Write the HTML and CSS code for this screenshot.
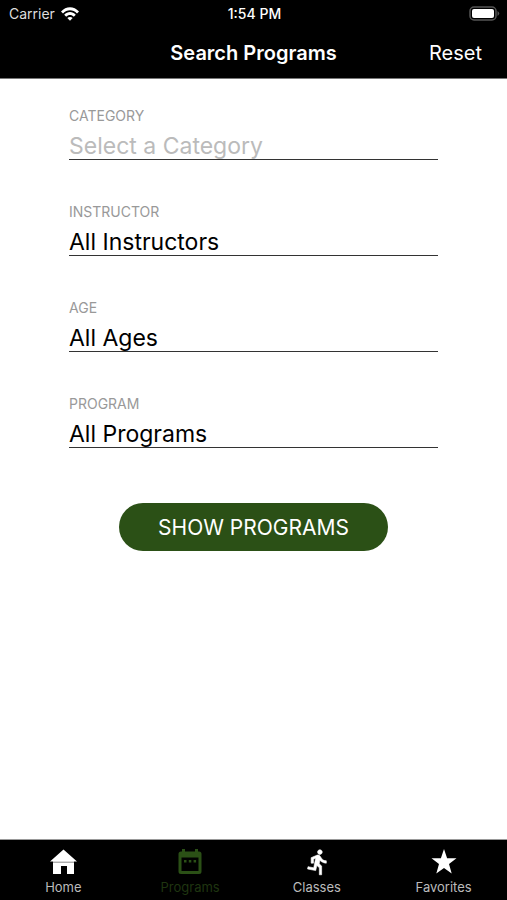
FILE: index.html
```html
<!DOCTYPE html>
<html lang="en">
<head>
<meta charset="utf-8">
<meta name="viewport" content="width=device-width, initial-scale=1">
<title>Search Programs</title>
<link rel="stylesheet" href="styles.css">
</head>
<body>
<header class="header">
  <div class="status">
    <div class="carrier">
      <span>Carrier</span>
      <svg class="wifi" viewBox="0 0 18 14" aria-hidden="true">
        <path d="M0 4.6C5-1.2 13-1.2 18 4.6L16 6.6C12 2.2 6 2.2 2 6.6Z"/>
        <path d="M3.2 7.8C6.5 4.2 11.5 4.2 14.8 7.8L12.8 9.8C10.6 7.4 7.4 7.4 5.2 9.8Z"/>
        <path d="M6.3 11C7.8 9.5 10.2 9.5 11.7 11L9 13.8Z"/>
      </svg>
    </div>
    <time class="clock">1:54 PM</time>
    <svg class="battery" viewBox="0 0 31 15" aria-hidden="true">
      <rect class="battery-shell" x="1" y="1" width="26" height="13" rx="4"/>
      <rect class="battery-fill" x="3" y="3" width="22" height="9" rx="2"/>
      <path class="battery-cap" d="M28.500 5Q32 7.500 28.500 10Z"/>
    </svg>
  </div>
  <div class="navbar">
    <h1 class="title">Search Programs</h1>
    <button class="reset" type="reset" form="search">Reset</button>
  </div>
</header>

<main class="main">
  <form class="form" id="search">
    <div class="field">
      <label class="label" for="category">CATEGORY</label>
      <select class="select" id="category" required>
        <option value="">Select a Category</option>
      </select>
    </div>
    <div class="field">
      <label class="label" for="instructor">INSTRUCTOR</label>
      <select class="select" id="instructor"><option>All Instructors</option></select>
    </div>
    <div class="field">
      <label class="label" for="age">AGE</label>
      <select class="select" id="age"><option>All Ages</option></select>
    </div>
    <div class="field">
      <label class="label" for="program">PROGRAM</label>
      <select class="select" id="program"><option>All Programs</option></select>
    </div>
    <button class="submit" type="submit">SHOW PROGRAMS</button>
  </form>
</main>

<nav class="tabs">
  <a class="tab" href="#home">
    <svg class="tab-icon" viewBox="0 0 28 28" aria-hidden="true">
      <path d="M14.500 1.500L28 13.500H25V26H18V18H12V26H4V13.500H1Z"/>
      <path class="eaves" d="M4 14.200H25"/>
    </svg>
    <span>Home</span>
  </a>
  <a class="tab tab-active" href="#programs" aria-current="page">
    <svg class="tab-icon" viewBox="0 0 28 28" aria-hidden="true">
      <path fill-rule="evenodd" d="M6 1H9V3.500H19V1H22V3.500H23Q25.500 3.500 25.500 6V23.500Q25.500 26 23 26H5Q2.500 26 2.500 23.500V6Q2.500 3.500 5 3.500H6ZM5.500 9.500V23H22.500V9.500Z"/>
      <path d="M8 12H10.500V14.500H8ZM12.800 12H15.300V14.500H12.800ZM17.600 12H20.100V14.500H17.600Z"/>
    </svg>
    <span>Programs</span>
  </a>
  <a class="tab" href="#classes">
    <svg class="tab-icon runner" viewBox="-1 0 24 24" aria-hidden="true">
      <path d="M13.490 5.480c1.100 0 2-.9 2-2s-.9-2-2-2-2 .9-2 2 .9 2 2 2zm-3.600 13.900l1-4.400 2.100 2v6h2v-7.500l-2.100-2 .6-3c1.300 1.500 3.300 2.500 5.500 2.500v-2c-1.900 0-3.500-1-4.300-2.400l-1-1.600c-.4-.6-1-1-1.700-1-.3 0-.5.1-.8.1l-5.200 2.200v4.700h2v-3.400l1.800-.7-1.600 8.100-4.900-1-.4 2 7 1.400z"/>
    </svg>
    <span>Classes</span>
  </a>
  <a class="tab" href="#favorites">
    <svg class="tab-icon" viewBox="0 0 28 28" aria-hidden="true">
      <path d="M14 1L17.100 10.200H26.500L19 15.900L21.700 25.500L14 19.900L6.300 25.500L9 15.900L1.500 10.200H10.900Z"/>
    </svg>
    <span>Favorites</span>
  </a>
</nav>
</body>
</html>
```

FILE: styles.css
```css
* {
  box-sizing: border-box;
}

body {
  margin: 0;
  min-height: 100vh;
  display: flex;
  flex-direction: column;
  background: #fff;
  color: #000;
  font-family: Inter, "Liberation Sans", sans-serif;
}

button,
select {
  margin: 0;
  padding: 0;
  border: 0;
  border-radius: 0;
  background: none;
  color: inherit;
  font: inherit;
}

.header {
  background: #000;
  color: #fff;
  border-bottom: 1px solid #777;
}

.status,
.navbar {
  display: grid;
  grid-template-columns: 1fr auto 1fr;
  align-items: center;
}

.status {
  height: 27px;
  padding: 0 7px 0 9px;
  font-size: 14px;
  line-height: 27px;
}

.carrier {
  display: flex;
  align-items: center;
  gap: 6px;
  color: #ddd;
}

.wifi {
  width: 18px;
  height: 14px;
  fill: #fff;
}

.clock {
  font-weight: 500;
}

.battery {
  justify-self: end;
  width: 31px;
  height: 15px;
}

.battery-shell {
  fill: none;
  stroke: #555;
  stroke-width: 1.5;
}

.battery-fill {
  fill: #fff;
}

.battery-cap {
  fill: #555;
}

.navbar {
  height: 51px;
  padding: 0 25px;
  font-size: 20px;
}

.title {
  grid-column: 2;
  margin: 0;
  font-size: 20px;
  font-weight: 600;
}

.reset {
  justify-self: end;
  cursor: pointer;
}

.main {
  flex: 1;
  padding: 29px 69px;
}

.form {
  display: flex;
  flex-direction: column;
  gap: 44px;
}

.field {
  display: flex;
  flex-direction: column;
}

.label {
  color: #999;
  font-size: 14px;
  line-height: 16px;
}

.select {
  appearance: none;
  width: 100%;
  height: 36px;
  padding-top: 10px;
  border-bottom: 1px solid #333;
  font-size: 23px;
  line-height: 25px;
}

.select:invalid {
  color: #bbb;
}

.submit {
  align-self: center;
  padding: 0 39px;
  margin-top: 11px;
  height: 48px;
  border-radius: 24px;
  background: #2b5016;
  color: #fff;
  font-size: 21px;
  cursor: pointer;
}

.tabs {
  display: grid;
  grid-template-columns: repeat(4, 1fr);
  height: 61px;
  padding-top: 8px;
  border-top: 1px solid #999;
  background: #000;
}

.tab {
  display: flex;
  flex-direction: column;
  align-items: center;
  gap: 2px;
  color: #bbb;
  font-size: 13px;
  line-height: 18px;
  text-decoration: none;
}

.tab-icon {
  width: 28px;
  height: 28px;
  fill: #fff;
}

.runner {
  stroke: #fff;
  stroke-width: 0.5;
}

.eaves {
  stroke: #888;
  stroke-width: 1;
}

.tab-active {
  color: #1f3510;
}

.tab-active .tab-icon {
  fill: #2b5016;
}
```
